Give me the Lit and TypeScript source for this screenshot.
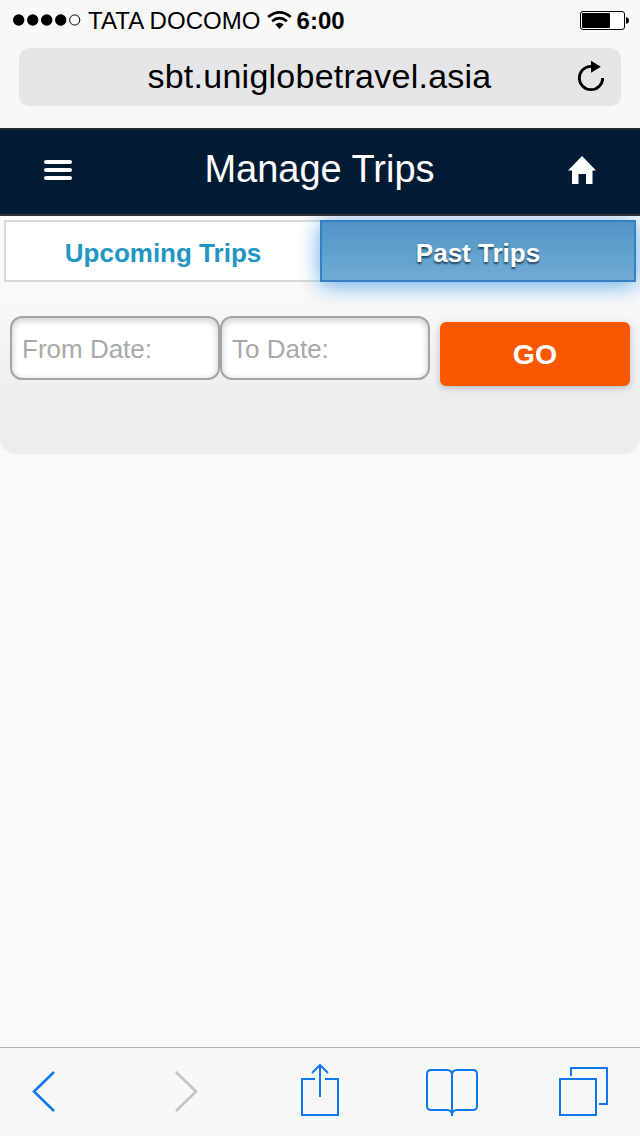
import { LitElement, html, css } from "lit";
import { customElement } from "lit/decorators.js";

@customElement("status-bar")
class StatusBar extends LitElement {
  static styles = css`
    :host { display: flex; align-items: center; box-sizing: border-box; height: 40px; padding: 0 11px 0 13px; font-size: 24px; line-height: 40px; color: #000; }
    .signal { display: block; margin-right: 7px; }
    .wifi { display: block; margin: 0 5px 0 6px; }
    .carrier { white-space: nowrap; padding-top: 1px; letter-spacing: 0.05px; }
    .time { font-weight: 700; flex: 1; padding-top: 1px; }
    .battery { display: block; margin-top: 2px; }
  `;
  render() {
    return html`
      <svg class="signal" width="68" height="12" viewBox="0 0 68 12">
        <circle cx="5.7" cy="6" r="5.7" /><circle cx="19.7" cy="6" r="5.7" />
        <circle cx="33.7" cy="6" r="5.7" /><circle cx="47.7" cy="6" r="5.7" />
        <circle cx="61.7" cy="6" r="5.1" fill="none" stroke="#000" stroke-width="1" />
      </svg>
      <span class="carrier">TATA DOCOMO</span>
      <svg class="wifi" width="25" height="18" viewBox="0 0 25 18" fill="none" stroke="#000" stroke-width="2.6">
        <path d="M1.2 6 Q12.5 -3.3 23.8 6" />
        <path d="M5.1 10.2 Q12.5 4 19.9 10.2" />
        <path d="M12.5 18 L8.3 13.4 Q12.5 10.2 16.7 13.4Z" fill="#000" stroke="none" />
      </svg>
      <span class="time">6:00</span>
      <svg class="battery" width="49" height="20" viewBox="0 0 49 20">
        <rect x="0.5" y="0.5" width="44" height="18" rx="2.5" fill="#fff" stroke="#000" />
        <rect x="2" y="2" width="28" height="15" rx="1" />
        <path d="M46 6.2 Q49 6.5 49 9.5 Q49 12.5 46 12.8Z" />
      </svg>
    `;
  }
}

@customElement("address-bar")
class AddressBar extends LitElement {
  static styles = css`
    :host { display: block; padding: 8px 19px 22px; }
    .field { display: grid; grid-template-columns: 60px 1fr 60px; align-items: center; height: 58px; border-radius: 10px; background: #e5e6e8; }
    .url { grid-column: 2; text-align: center; font-size: 34px; line-height: 56px; padding: 0 1px 2px 0; letter-spacing: 0.25px; color: #000; white-space: nowrap; }
    .reload { display: block; justify-self: center; margin-bottom: 2px; }
  `;
  render() {
    return html`
      <div class="field">
        <span class="url">sbt.uniglobetravel.asia</span>
        <svg class="reload" width="28" height="32" viewBox="0 0 28 32">
          <path d="M14 6.3 A11.7 11.7 0 1 0 25.7 18" fill="none" stroke="#000" stroke-width="2.8" />
          <path d="M14 0.8 L23.8 6.8 L14 12.8Z" />
        </svg>
      </div>
    `;
  }
}

@customElement("page-header")
class PageHeader extends LitElement {
  static styles = css`
    :host { display: grid; grid-template-columns: 116px 1fr 116px; align-items: center; justify-items: center; height: 88px; box-sizing: border-box; border-top: 2px solid #222a31; border-bottom: 2px solid #2c3035; background: #011b35; color: #fff; }
    .title { margin: 0; height: 84px; padding-right: 1px; box-sizing: border-box; font-size: 38px; font-weight: 400; line-height: 79px; white-space: nowrap; }
    .icon { display: block; margin-bottom: 4px; }
  `;
  render() {
    return html`
      <svg class="icon" width="28" height="28" viewBox="0 0 28 28" stroke="#fff" stroke-width="4" stroke-linecap="round">
        <path d="M2 6H26M2 14H26M2 22H26" />
      </svg>
      <h1 class="title">Manage Trips</h1>
      <svg class="icon" width="28" height="28" viewBox="0 0 28 28" fill="#fff">
        <path d="M14 0 L28 14.5 H24.5 V28 H18 V18 H10.5 V28 H4 V14.5 H0Z" />
      </svg>
    `;
  }
}

@customElement("trip-search")
class TripSearch extends LitElement {
  static styles = css`
    :host { display: block; height: 238px; box-sizing: border-box; padding: 4px 4px 0; border-radius: 0 0 16px 16px; background: linear-gradient(#fafafa 0, #f9f9f9 80px, #ededed 186px, #ededed 100%); overflow: hidden; }
    .tabs { display: grid; grid-template-columns: 1fr 1fr; grid-template-rows: 62px; }
    .tab { box-sizing: border-box; height: 62px; padding-top: 2px; border: 2px solid #d8dad9; background: #fff; text-align: center; font-size: 26px; font-weight: 700; line-height: 58px; color: #2196c3; white-space: nowrap; }
    .upcoming { border-right: 0; }
    .past { position: relative; border-color: #3580c2; background: linear-gradient(#5393c5, #6facd5); color: #fff; text-shadow: 0 2px 2px #1f4560; box-shadow: 0 3px 22px #5fa8e8; }
    .form { display: grid; grid-template-columns: 210px 210px 200px; padding: 34px 6px 0; }
    .date { box-sizing: border-box; width: 210px; height: 64px; margin: 0; padding: 2px 10px 0 10px; border: 2px solid #a4a4a4; border-radius: 12px; background: #fff; box-shadow: inset 0 2px 7px rgba(0, 0, 0, 0.22); font: 400 26px "Liberation Sans", Arial, sans-serif; outline: none; }
    .date::placeholder { color: #a9a9a9; opacity: 1; }
    .go { box-sizing: border-box; width: 190px; height: 64px; margin: 6px 0 0 10px; padding: 1px 0 0; border: 0; border-radius: 6px; background: #f95800; box-shadow: 0 2px 7px rgba(90, 110, 140, 0.4); font: 700 28.5px "Liberation Sans", Arial, sans-serif; color: #fff; }
  `;
  render() {
    return html`
      <div class="tabs">
        <div class="tab upcoming">Upcoming Trips</div>
        <div class="tab past">Past Trips</div>
      </div>
      <div class="form">
        <input class="date" placeholder="From Date:" />
        <input class="date" placeholder="To Date:" />
        <button class="go">GO</button>
      </div>
    `;
  }
}

@customElement("browser-toolbar")
class BrowserToolbar extends LitElement {
  static styles = css`
    :host { display: flex; align-items: center; height: 89px; box-sizing: border-box; border-top: 1px solid #adb0b0; padding: 0 32px; background: #f8f8f8; }
    .icon { display: block; fill: none; stroke: #0f78ee; stroke-width: 2; }
    .back { stroke-width: 2.6; }
    .forward { stroke: #c3c3c3; stroke-width: 2.6; margin-left: 120px; }
    .share { margin: 0 0 4px 102px; }
    .book { margin-left: 86px; }
    .pages { margin-left: 80px; }
  `;
  render() {
    return html`
      <svg class="icon back" width="23" height="42" viewBox="0 0 23 42"><path d="M22 1 L2 20.5 L22 40" /></svg>
      <svg class="icon forward" width="23" height="42" viewBox="0 0 23 42"><path d="M1 1 L21 20.5 L1 40" /></svg>
      <svg class="icon share" width="40" height="54" viewBox="0 0 40 54">
        <path d="M15 16H2V52H38V16H25M20 34V2M12 10L20 2L28 10" />
      </svg>
      <svg class="icon book" width="52" height="50" viewBox="0 0 52 50">
        <path d="M26 49V8Q26 3 21 3H5Q1 3 1 7V39Q1 43 5 43H21Q26 43 26 48Q26 43 31 43H47Q51 43 51 39V7Q51 3 47 3H31Q26 3 26 8" />
      </svg>
      <svg class="icon pages" width="50" height="50" viewBox="0 0 50 50">
        <path d="M2 12H38V48H2ZM13 9V1H49V37H41" />
      </svg>
    `;
  }
}

@customElement("app-root")
class AppRoot extends LitElement {
  static styles = css`
    :host { display: flex; flex-direction: column; height: 1136px; background: #f9f9f9; font-family: "Liberation Sans", Arial, sans-serif; overflow: hidden; }
    .chrome { background: #f8f8f8; }
    .page { flex: 1; }
  `;
  render() {
    return html`
      <div class="chrome">
        <status-bar></status-bar>
        <address-bar></address-bar>
      </div>
      <main class="page">
        <page-header></page-header>
        <trip-search></trip-search>
      </main>
      <browser-toolbar></browser-toolbar>
    `;
  }
}
